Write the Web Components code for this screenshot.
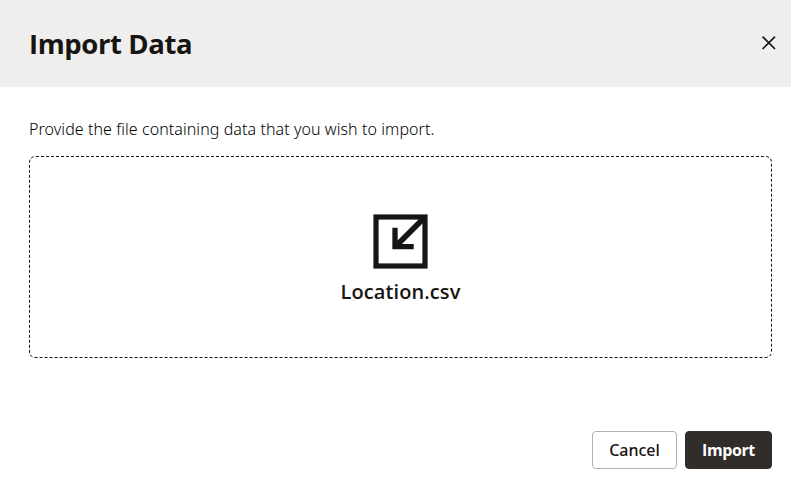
<!DOCTYPE html>
<html lang="en">
<head>
<meta charset="utf-8">
<title>Import Data</title>
<style>
body{margin:0;background:#fff;color:#161513;font-family:"Open Sans","Noto Sans",sans-serif}
</style>
</head>
<body>
<import-dialog></import-dialog>
<script>
const define = (name, html) => customElements.define(name, class extends HTMLElement {
  constructor() {
    super();
    this.attachShadow({mode: 'open'}).innerHTML = html;
  }
});

define('dialog-header', `
<style>
:host{display:flex;box-sizing:border-box;height:87px;padding:0 14px 1px 29px;background:#efeeec;align-items:center;justify-content:space-between}
h1{margin:2px 0 0;font-size:27.5px;line-height:36px;font-weight:700;letter-spacing:-.4px;white-space:nowrap}
button{display:block;padding:0;border:0;background:none;width:16px;height:16px;color:inherit}
svg{display:block}
</style>
<h1><slot></slot></h1>
<button aria-label="Close"><svg width="16" height="16" viewBox="0 0 16 16" fill="none" stroke="currentColor" stroke-width="1.7"><path d="M1.6 1.6 14 14M14 1.6 1.6 14"/></svg></button>`);

define('file-drop', `
<style>
:host{display:flex;position:relative;box-sizing:border-box;width:743px;height:202px;flex-direction:column;align-items:center;padding-top:58px}
.outline{position:absolute;inset:0;width:100%;height:100%}
.icon{display:block;width:55px;height:55px}
.name{margin-top:9px;font-size:20px;line-height:28px;font-weight:600;letter-spacing:.08px;white-space:nowrap}
</style>
<svg class="outline" viewBox="0 0 743 202" fill="none" stroke="#161513"><path stroke-dasharray="3 2" d="M7 .5H736Q742.500 .5 742.500 7V195Q742.500 201.500 736 201.500H7Q.5 201.500 .5 195V7Q.5 .5 7 .5"/></svg>
<svg class="icon" viewBox="0 0 55 55" fill="none" stroke="#161513"><rect x="3" y="3" width="49" height="49" stroke-width="5.200"/><path d="M51 4 23 32" stroke-width="5.600"/><path d="M22 13.700V32.600H40.700" stroke-width="5.300"/></svg>
<div class="name"><slot></slot></div>`);

define('dialog-button', `
<style>
:host{display:block}
button{display:flex;box-sizing:border-box;width:85px;height:38px;padding:0;align-items:center;justify-content:center;border:1px solid #b1b0ae;border-radius:4px;background:#fff;color:#161513;font:500 16px/20px "Noto Sans",sans-serif}
:host([primary]) button{width:87px;background:#312d2a;border-color:#312d2a;color:#fff;font-family:"Open Sans",sans-serif;font-weight:700;letter-spacing:-.4px}
</style>
<button><span><slot></slot></span></button>`);

define('import-dialog', `
<style>
:host{display:flex;flex-direction:column;box-sizing:border-box;width:791px;height:484px}
main{padding:30px 19px 0 29px;flex:1}
p{margin:0 0 15px;font-family:"Noto Sans",sans-serif;font-size:16px;line-height:24px;font-weight:300;letter-spacing:.075px;color:#000;white-space:nowrap}
footer{display:flex;justify-content:flex-end;gap:8px;padding:0 19px 15px}
</style>
<dialog-header>Import Data</dialog-header>
<main><p>Provide the file containing data that you wish to import.</p><file-drop>Location.csv</file-drop></main>
<footer><dialog-button>Cancel</dialog-button><dialog-button primary>Import</dialog-button></footer>`);
</script>
</body>
</html>
